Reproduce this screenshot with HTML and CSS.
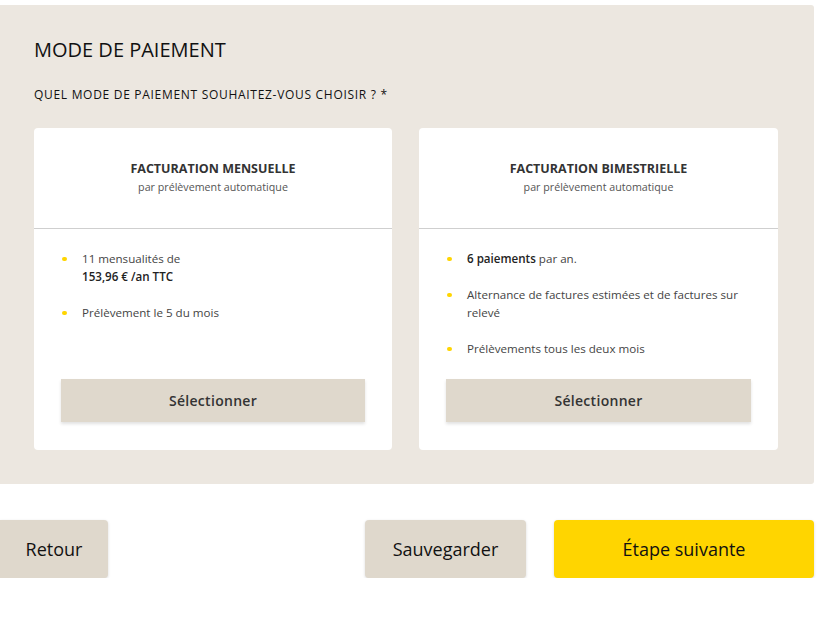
FILE: index.html
```html
<!DOCTYPE html>
<html lang="fr">
<head>
    <meta charset="UTF-8">
    <meta name="viewport" content="width=device-width, initial-scale=1.0">
    <title>Mode de paiement</title>
    <link rel="stylesheet" href="styles.css">
</head>
<body>
    <div id="panel">
        <h2 class="title">MODE DE PAIEMENT</h2>
        <p class="question">Quel mode de paiement souhaitez-vous choisir ? *</p>

        <div class="cards">
            <div class="card">
                <div class="card-head">
                    <h3>FACTURATION MENSUELLE</h3>
                    <span>par prélèvement automatique</span>
                </div>
                <div class="card-body">
                    <ul class="list">
                        <li>11 mensualités de<br><b>153,96 € /an TTC</b></li>
                        <li>Prélèvement le 5 du mois</li>
                    </ul>
                    <button class="select">Sélectionner</button>
                </div>
            </div>

            <div class="card">
                <div class="card-head">
                    <h3>FACTURATION BIMESTRIELLE</h3>
                    <span>par prélèvement automatique</span>
                </div>
                <div class="card-body">
                    <ul class="list">
                        <li><b>6 paiements</b> par an.</li>
                        <li>Alternance de factures estimées et de factures sur relevé</li>
                        <li>Prélèvements tous les deux mois</li>
                    </ul>
                    <button class="select">Sélectionner</button>
                </div>
            </div>
        </div>
    </div>

    <div id="actions">
        <button class="btn" id="back">Retour</button>
        <div class="right">
            <button class="btn" id="save">Sauvegarder</button>
            <button class="btn" id="next">Étape suivante</button>
        </div>
    </div>
</body>
</html>
```

FILE: styles.css
```css
* {
    margin: 0;
    padding: 0;
    box-sizing: border-box;
}

body {
    font-family: "Open Sans", "Noto Sans", sans-serif;
    color: #222;
    background: #fff;
    width: 824px;
}

#panel {
    margin-top: 5px;
    width: 814px;
    background-color: #ece7e0;
    border-radius: 0 3px 3px 0;
    padding: 33px 36px 34px 34px;
}
.title {
    font-size: 20px;
    font-weight: 400;
    line-height: 24px;
    color: #111;
}
.question {
    margin-top: 26px;
    font-size: 12px;
    line-height: 14px;
    text-transform: uppercase;
    letter-spacing: 0.7px;
    color: #111;
}

.cards {
    margin-top: 26px;
    display: grid;
    grid-template-columns: 358px 359px;
    gap: 27px;
}
.card {
    background: #fff;
    border-radius: 4px;
    height: 322px;
    display: flex;
    flex-direction: column;
}
.card-head {
    height: 101px;
    border-bottom: 1px solid #cfcfcf;
    text-align: center;
    padding-top: 32px;
}
.card-head h3 {
    font-size: 12.5px;
    font-weight: 700;
    line-height: 18px;
    color: #333;
}
.card-head span {
    display: block;
    font-size: 10.7px;
    line-height: 18px;
    color: #555;
}
.card-body {
    flex: 1;
    display: flex;
    flex-direction: column;
    padding: 21px 27px 28px 27px;
}
.list {
    list-style: none;
}
.list li {
    position: relative;
    padding-left: 21px;
    padding-right: 8px;
    font-size: 11.6px;
    line-height: 18px;
    color: #444;
    margin-bottom: 18px;
}
.list li b {
    font-weight: 600;
    color: #222;
}
.list li::before {
    content: "";
    position: absolute;
    left: 1px;
    top: 7px;
    width: 5px;
    height: 4px;
    border-radius: 2px;
    background: #ffd500;
}
.select {
    margin-top: auto;
    height: 43px;
    border: none;
    background: #dfd8cc;
    box-shadow: 0 2px 3px rgba(0, 0, 0, 0.12);
    font-family: "Open Sans", sans-serif;
    font-size: 14px;
    font-weight: 600;
    letter-spacing: 0.3px;
    color: #333;
}

#actions {
    margin-top: 36px;
    width: 814px;
    display: flex;
    justify-content: space-between;
}
.right {
    display: flex;
    gap: 28px;
}
.btn {
    height: 58px;
    border: none;
    border-radius: 4px;
    font-family: "Open Sans", sans-serif;
    font-size: 18px;
    color: #111;
    box-shadow: 0 1px 3px rgba(0, 0, 0, 0.15);
}
#back {
    width: 108px;
    border-radius: 0 4px 4px 0;
    background: #dfd8cc;
}
#save {
    width: 161px;
    background: #dfd8cc;
}
#next {
    width: 260px;
    background: #ffd500;
}
```
